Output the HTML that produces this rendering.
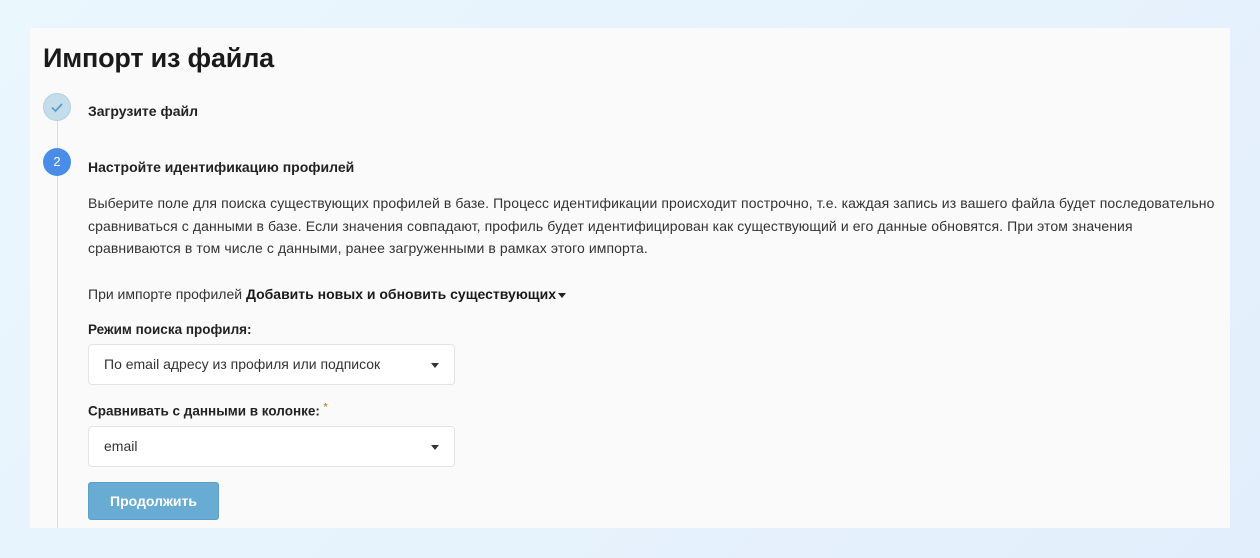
<!DOCTYPE html>
<html><head><meta charset="utf-8"><style>
*{margin:0;padding:0;box-sizing:border-box}
body{width:1260px;height:558px;overflow:hidden;background:linear-gradient(135deg,#eaf7fd,#e3eefc);font-family:"Liberation Sans","DejaVu Sans",sans-serif;color:#222;position:relative}
.card{position:absolute;left:30px;top:28px;width:1200px;height:500px;background:#fafafa;overflow:hidden}
.abs{position:absolute;white-space:nowrap}
h1{position:absolute;left:13px;top:15px;font-size:27px;font-weight:bold;color:#1a1a1a;letter-spacing:-0.2px}
.line{position:absolute;left:27px;top:80px;width:1px;height:420px;background:#ddd}
.c{position:absolute;width:28px;height:28px;border-radius:50%;left:13px}
.b{font-weight:bold;font-size:14px}
.p{font-size:14px;line-height:22.5px;color:#333;letter-spacing:0.1px}
.sel{position:absolute;left:58px;width:367px;height:41px;background:#fff;border:1px solid #e3e3e3;border-radius:4px;font-size:14px;padding-left:15px;line-height:39px;color:#333}
.sel:after{content:"";position:absolute;right:15px;top:18px;border-left:4.5px solid transparent;border-right:4.5px solid transparent;border-top:5px solid #333}
</style></head><body>
<div class="card">
<h1>Импорт из файла</h1>
<div class="line"></div>
<div class="c" style="top:65px;background:#c5dcea;border:1px solid #b3d0e2"><svg width="28" height="28" style="position:absolute;left:-1px;top:-1px"><path d="M9 14.5l3.5 3.5 6.5-7" fill="none" stroke="#5a9ccc" stroke-width="1.8"/></svg></div>
<div class="abs b" style="left:58px;top:75px">Загрузите файл</div>
<div class="c" style="top:120px;background:#4a8de8;color:#fff;font-size:13px;text-align:center;line-height:28px">2</div>
<div class="abs b" style="left:58px;top:131px">Настройте идентификацию профилей</div>
<div class="abs p" style="left:58px;top:164px">Выберите поле для поиска существующих профилей в базе. Процесс идентификации происходит построчно, т.е. каждая запись из вашего файла будет последовательно<br>сравниваться с данными в базе. Если значения совпадают, профиль будет идентифицирован как существующий и его данные обновятся. При этом значения<br>сравниваются в том числе с данными, ранее загруженными в рамках этого импорта.</div>
<div class="abs" style="left:58px;top:258px;font-size:14px;color:#333">При импорте профилей <b style="color:#1a1a1a">Добавить новых и обновить существующих</b><span style="display:inline-block;margin-left:2px;vertical-align:middle;border-left:4px solid transparent;border-right:4px solid transparent;border-top:5px solid #222"></span></div>
<div class="abs b" style="left:58px;top:294px;font-size:13.5px">Режим поиска профиля:</div>
<div class="sel" style="top:316px">По email адресу из профиля или подписок</div>
<div class="abs b" style="left:58px;top:374px;font-size:13.5px">Сравнивать с данными в колонке: <sup style="color:#c8864a;font-size:10px">*</sup></div>
<div class="sel" style="top:398px">email</div>
<div class="abs" style="left:58px;top:454px;width:131px;height:38px;background:#68abd3;border:1px solid #5c9fc8;border-radius:3px;color:#fff;font-weight:bold;font-size:14px;text-align:center;line-height:36px">Продолжить</div>
</div>
</body></html>
